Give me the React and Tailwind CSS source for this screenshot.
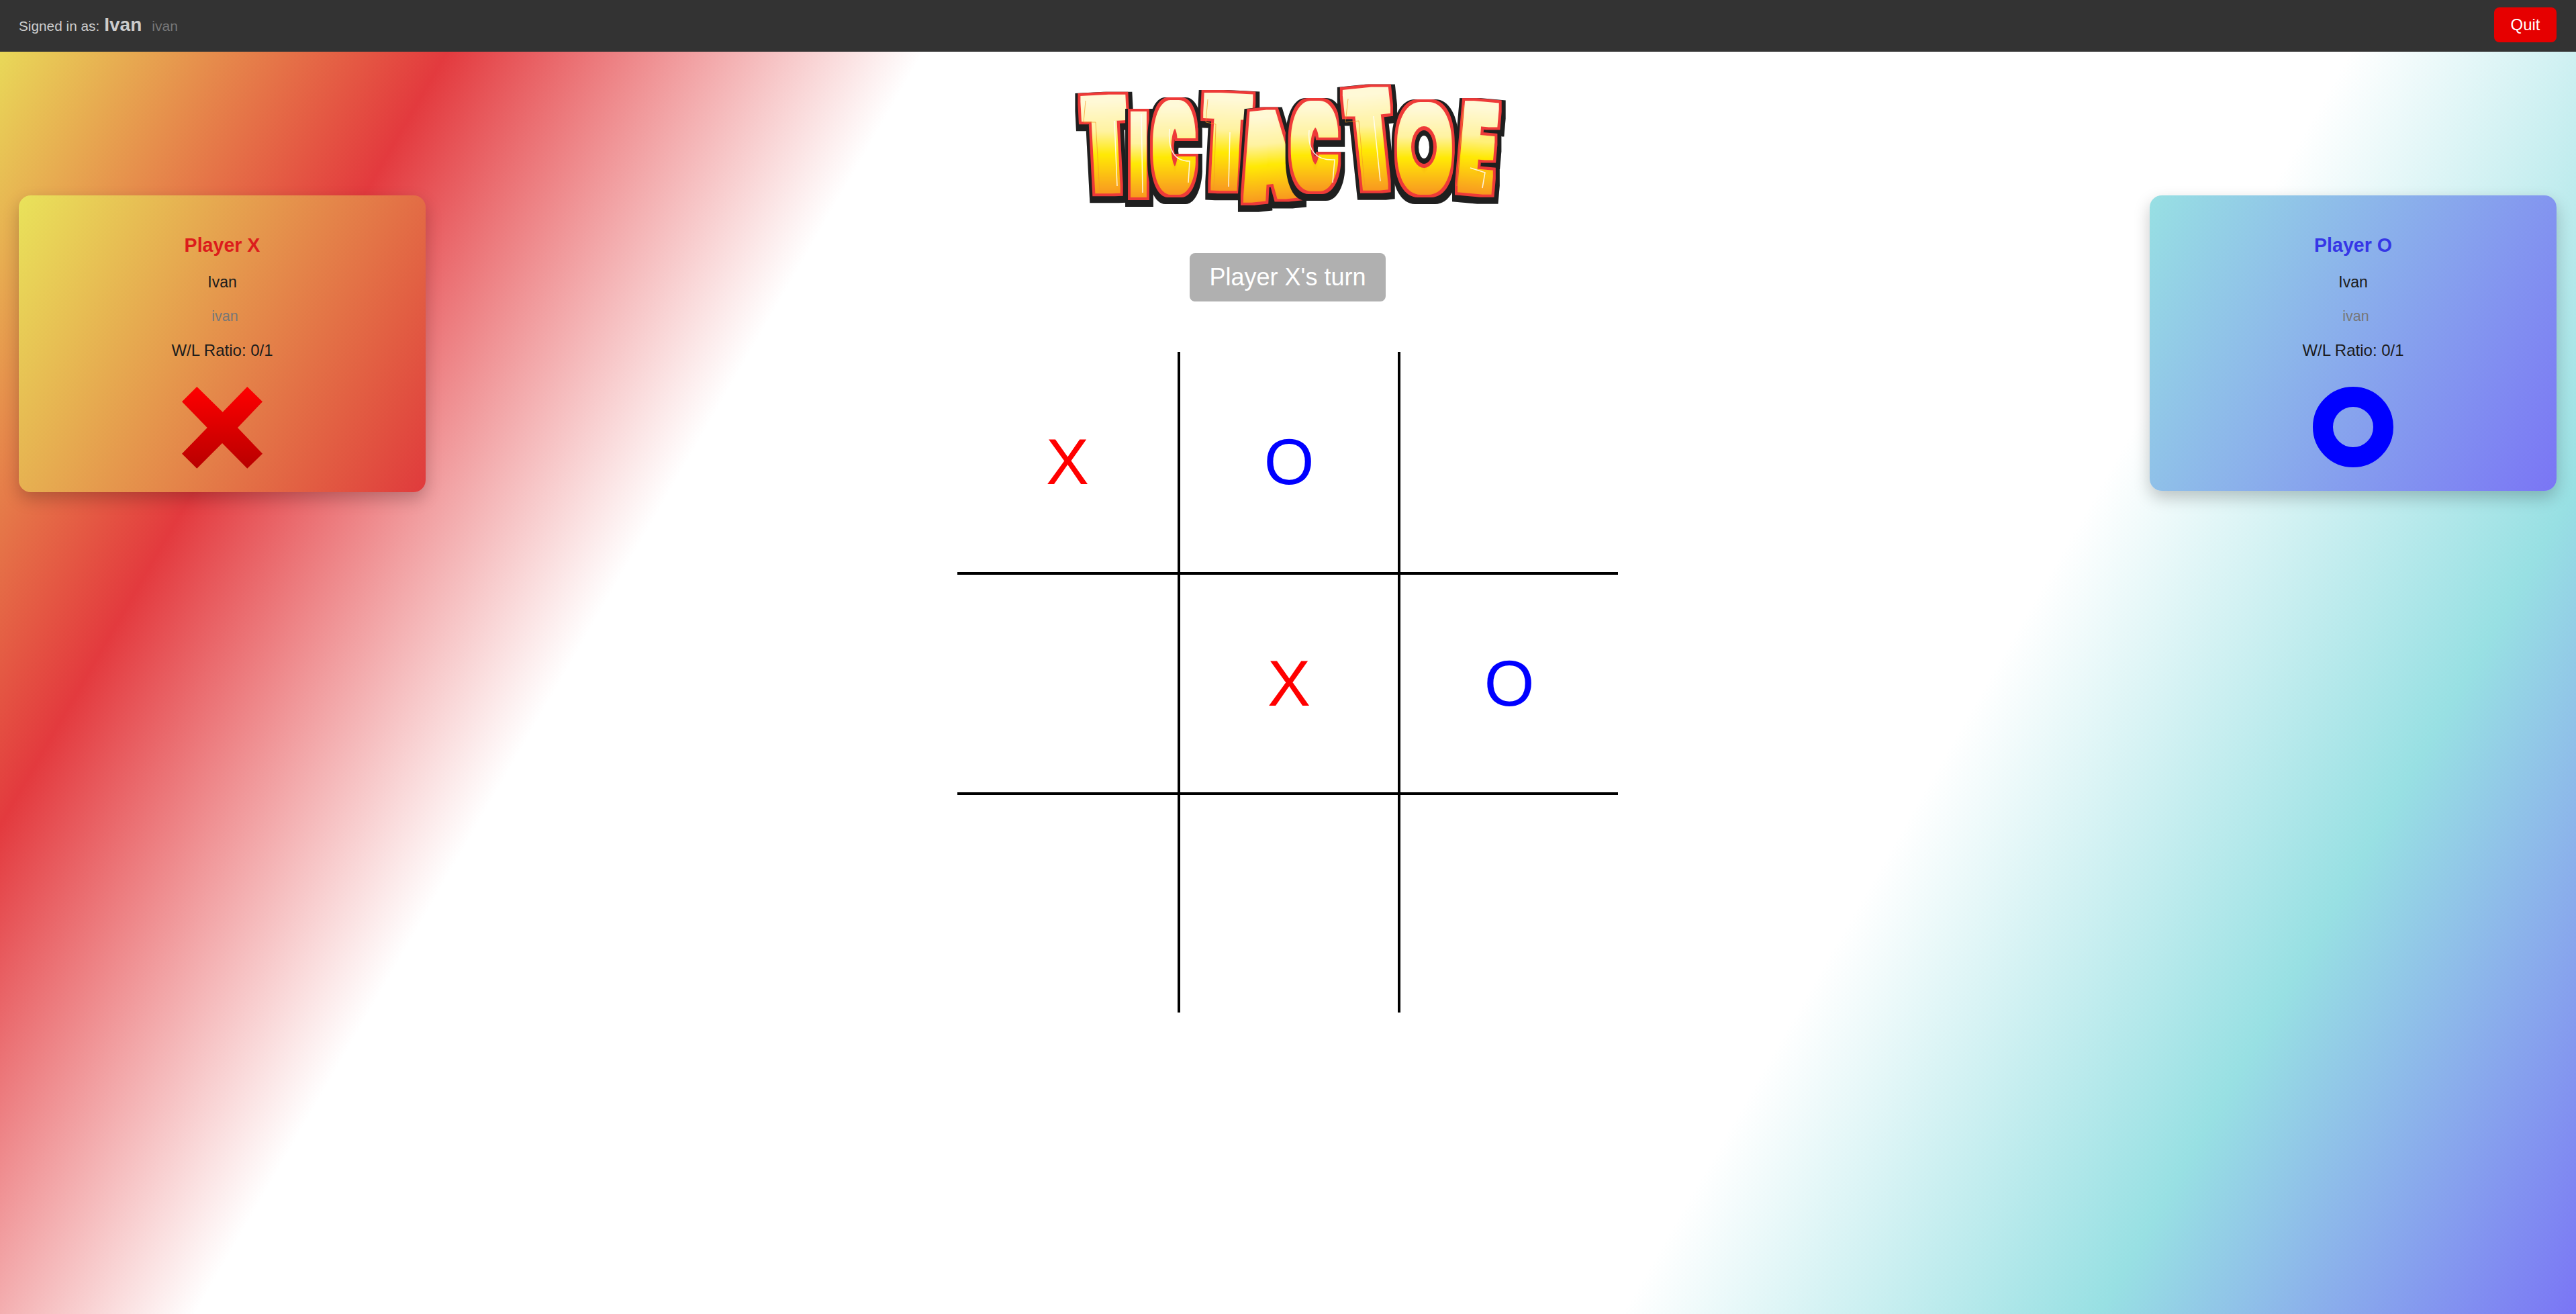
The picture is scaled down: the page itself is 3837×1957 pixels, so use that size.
const SANS = "font-['Liberation_Sans',Arial,sans-serif]"

// logo letters: centre x, baseline y, rotation, x/y scale (font-size 100), outline filter
const LETTERS = [
  { ch: 'T', x: 50, y: 162, r: -3, sx: 0.68, sy: 1.9, f: 'logoHeavy' },
  { ch: 'I', x: 96, y: 168, r: 0, sx: 0.6, sy: 1.65, f: 'logoMedium' },
  { ch: 'C', x: 149, y: 162, r: 0, sx: 0.76, sy: 1.77, f: 'logoMedium' },
  { ch: 'T', x: 223, y: 158, r: 3, sx: 0.77, sy: 1.88, f: 'logoHeavy' },
  { ch: 'A', x: 294, y: 172, r: -6, sx: 0.97, sy: 1.73, f: 'logoMedium' },
  { ch: 'C', x: 358, y: 157, r: 0, sx: 0.86, sy: 1.7, f: 'logoMedium' },
  { ch: 'T', x: 449, y: 157, r: -6, sx: 0.7, sy: 1.98, f: 'logoHeavy' },
  { ch: 'O', x: 522, y: 162, r: 0, sx: 0.99, sy: 1.73, f: 'logoMedium' },
  { ch: 'E', x: 596, y: 162, r: 5, sx: 0.74, sy: 1.77, f: 'logoMedium' },
]

// thin shine lines on the letters of the logo
const SHINE = [
  'M60 58 L64 155',
  'M100 48 L102 165',
  'M142 70 Q138 118 172 118 L170 150',
  'M232 75 L230 156',
  'M350 72 Q346 118 388 116 L385 150',
  'M446 51 L456 148',
  'M590 128 L612 135 L608 158',
]
const EDGE = [
  'M17 28 L14 60 L32 60 L38 165',
  'M199 26 L196 60 L211 63 L208 161',
  'M408 25 L404 60 L424 58 L433 158',
  'M580 35 L570 155',
]

function OutlineFilter({ id, fat }) {
  return (
    <filter id={id} filterUnits="userSpaceOnUse" x="-40" y="-40" width="720" height="280" colorInterpolationFilters="sRGB">
      <feMorphology in="SourceGraphic" operator="dilate" radius={`${fat} 4`} result="fat" />
      <feMorphology in="SourceAlpha" operator="dilate" radius={`${fat + 4} 8`} result="redShape" />
      <feFlood floodColor="#ee3a38" />
      <feComposite in2="redShape" operator="in" result="red" />
      <feMorphology in="SourceAlpha" operator="dilate" radius={`${fat + 9} 13`} result="blackShape" />
      <feOffset in="blackShape" dx="1" dy="5" result="blackMoved" />
      <feFlood floodColor="#1f1f1f" />
      <feComposite in2="blackMoved" operator="in" result="black" />
      <feMerge>
        <feMergeNode in="black" />
        <feMergeNode in="red" />
        <feMergeNode in="fat" />
      </feMerge>
    </filter>
  )
}

function Logo() {
  return (
    <svg width="637" height="195" viewBox="0 0 637 195" className="block overflow-visible">
      <defs>
        <linearGradient id="logoFill" gradientUnits="userSpaceOnUse" x1="0" y1="-75" x2="0" y2="0">
          <stop offset="0" stopColor="#fff9dc" />
          <stop offset="0.35" stopColor="#fff2a0" />
          <stop offset="0.6" stopColor="#ffe800" />
          <stop offset="1" stopColor="#f8981d" />
        </linearGradient>
        <OutlineFilter id="logoHeavy" fat={12} />
        <OutlineFilter id="logoMedium" fat={6} />
      </defs>
      {LETTERS.map((l, i) => (
        <g key={i} filter={`url(#${l.f})`}>
          <text
            transform={`translate(${l.x} ${l.y}) rotate(${l.r}) scale(${l.sx} ${l.sy})`}
            textAnchor="middle"
            fontFamily="Inter, 'Liberation Sans', sans-serif"
            fontWeight="900"
            fontSize="100"
            fill="url(#logoFill)"
          >
            {l.ch}
          </text>
        </g>
      ))}
      {/* hole of the O */}
      <ellipse cx="521" cy="97" rx="19" ry="31" fill="#ee3a38" />
      <ellipse cx="521" cy="97" rx="14" ry="25" fill="#1f1f1f" />
      <ellipse cx="521" cy="97" rx="8" ry="17" fill="#ffffff" />
      {EDGE.map((d) => (
        <path key={d} d={d} fill="none" stroke="#f59a23" strokeWidth="1" strokeOpacity="0.7" />
      ))}
      {SHINE.map((d) => (
        <path key={d} d={d} fill="none" stroke="#ffffff" strokeWidth="1.5" strokeOpacity="0.85" />
      ))}
    </svg>
  )
}

function BigX() {
  return (
    <svg width="120" height="122" viewBox="0 0 120 122">
      <defs>
        <linearGradient id="xFill" x1="0" y1="0" x2="0" y2="1">
          <stop offset="0" stopColor="#ff0000" />
          <stop offset="1" stopColor="#b80000" />
        </linearGradient>
      </defs>
      <polygon
        fill="url(#xFill)"
        points="22.3,0 60.7,37.7 97.3,0 120,22.3 83,61 120,99.7 97.3,121.7 60,84 22.3,121.7 0,99.7 37.7,61 0,22.3"
      />
    </svg>
  )
}

function PlayerCard({ title, titleClass, bgClass, heightClass, children }) {
  return (
    <div className={`w-[606px] rounded-[18px] pt-[54px] flex flex-col items-center shadow-[0_10px_24px_rgba(0,0,0,0.22)] ${heightClass} ${bgClass}`}>
      <h3 className={`text-[28.6px] leading-[40px] font-bold ${titleClass}`}>{title}</h3>
      <p className="mt-[15px] text-[23px] leading-[40px] text-[#1c1c1c]">Ivan</p>
      <p className="mt-[11px] ml-2 text-[21.5px] leading-[40px] text-[#777]">ivan</p>
      <p className="mt-[11px] text-[24px] leading-[40px] text-[#1c1c1c]">W/L Ratio: 0/1</p>
      <div className="mt-[34px]">{children}</div>
    </div>
  )
}

const BOARD = ['X', 'O', '', '', 'X', 'O', '', '', '']
const CELL_BORDERS = [
  'border-r-4 border-b-4', 'border-r-4 border-b-4', 'border-b-4',
  'border-r-4 border-b-4', 'border-r-4 border-b-4', 'border-b-4',
  'border-r-4', 'border-r-4', '',
]

export default function App() {
  return (
    <div className={`min-h-screen flex flex-col ${SANS} bg-[linear-gradient(120deg,#e9e35a_0%,#e33a3e_14.3%,#ffffff_28.6%,#ffffff_71.4%,#98e0e3_85.7%,#7a75f5_100%)]`}>
      <header className="h-[77px] bg-[#333333] pl-[28px] pr-[29px] pb-[3px] flex items-center justify-between">
        <div className="flex items-baseline text-[#cccccc]">
          <span className="text-[20.8px]">Signed in as:</span>
          <span className="ml-[7px] text-[28px] font-bold">Ivan</span>
          <span className="ml-[15px] text-[21px] text-[#777777]">ivan</span>
        </div>
        <button className="w-[93px] h-[52px] rounded-[8px] bg-[#e60000] text-white text-[24px]">Quit</button>
      </header>

      <main className="flex items-start justify-between pl-[28px] pr-[29px]">
        <div className="mt-[214px]">
          <PlayerCard
            title="Player X"
            titleClass="text-[#dc1c1c]"
            heightClass="h-[442px]"
            bgClass="bg-[linear-gradient(120deg,#e9e35a,#e03a3c)]"
          >
            <BigX />
          </PlayerCard>
        </div>

        <div className="w-[984px] flex flex-col items-center pt-[45px]">
          <Logo />
          <div className="mt-[60px] w-[292px] h-[72px] rounded-[8px] bg-[#b0b0b0] text-white text-[36px] flex items-center justify-center">
            Player X's turn
          </div>
          <div className="mt-[75px] grid grid-cols-[332px_328px_324px] grid-rows-[332px_328px_324px] w-[984px]">
            {BOARD.map((v, i) => (
              <div
                key={i}
                className={`border-black flex items-center justify-center text-[96px] ${CELL_BORDERS[i]} ${v === 'X' ? 'text-[#ff0000]' : 'text-[#0000ff]'}`}
              >
                {v}
              </div>
            ))}
          </div>
        </div>

        <div className="mt-[214px]">
          <PlayerCard
            title="Player O"
            titleClass="text-[#3636e6]"
            heightClass="h-[440px]"
            bgClass="bg-[linear-gradient(120deg,#98e0e3,#7a75f5)]"
          >
            <div className="w-[120px] h-[120px] rounded-full border-[30px] border-[#0000ff]" />
          </PlayerCard>
        </div>
      </main>
    </div>
  )
}
